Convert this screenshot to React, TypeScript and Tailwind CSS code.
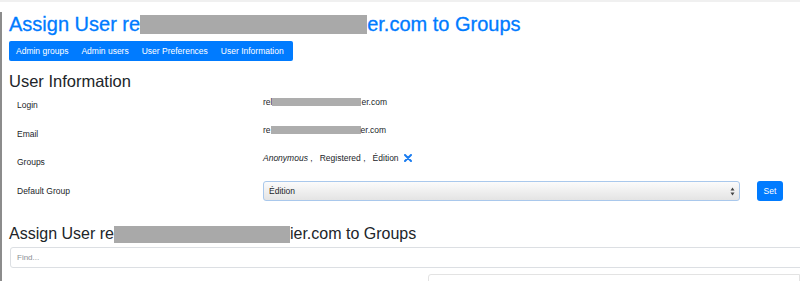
import React from 'react';

const Redact = ({ w, h }: { w: number; h: number }) => (
  <span className="inline-block bg-[#adadad] align-middle" style={{ width: w, height: h }} />
);

export default function App() {
  const navItems = ['Admin groups', 'Admin users', 'User Preferences', 'User Information'];

  return (
    <div className="h-[281px] w-[800px] overflow-hidden bg-white font-['Liberation_Sans',Arial,sans-serif] text-[#212529]">
      <div className="h-[2px] bg-[#f0f0f0]" />
      <div className="mt-[2px] h-full border-l-2 border-[#8c8c8c] pl-[7px]">
        {/* Title */}
        <h1 className="mt-[10px] flex h-[24px] items-center whitespace-nowrap text-[20px] leading-[24px] text-[#007bff] [-webkit-text-stroke:0.3px_#007bff]">
          <span>Assign User re</span>
          <span className="inline-block h-[19px] w-[227px] bg-[#a9a9a9]" />
          <span>er.com to Groups</span>
        </h1>

        {/* Tabs */}
        <nav className="mt-[5px] flex h-[20px] w-[284px] items-center gap-[13px] rounded-[2px] bg-[#007bff] px-[7px] text-[8.5px] text-white">
          {navItems.map((n) => (
            <span key={n} className="whitespace-nowrap">{n}</span>
          ))}
        </nav>

        {/* User Information */}
        <h2 className="mt-[10px] h-[20px] text-[16.5px] leading-[20px]">User Information</h2>

        <div className="text-[8.5px] leading-[12px]">
          <div className="flex h-[29px] pl-[8px]">
            <div className="w-[246px] pt-[8px]">Login</div>
            <div className="box-content flex h-[12px] items-center pt-[5px]">
              <span>rel</span>
              <Redact w={89} h={8} />
              <span>er.com</span>
            </div>
          </div>
          <div className="flex h-[29px] pl-[8px]">
            <div className="w-[246px] pt-[8px]">Email</div>
            <div className="box-content flex h-[12px] items-center pt-[4px]">
              <span>re</span>
              <Redact w={90} h={8} />
              <span>er.com</span>
            </div>
          </div>
          <div className="flex h-[29px] pl-[8px]">
            <div className="w-[246px] pt-[7px]">Groups</div>
            <div className="box-content flex h-[12px] items-center whitespace-pre pt-[3px]">
              <span className="italic">Anonymous</span>
              <span> ,   Registered ,   Édition </span>
              <svg className="ml-[3px]" width="8" height="8" viewBox="0 0 8 8">
                <path d="M1 1 L7 7 M7 1 L1 7" stroke="#1a7cf0" strokeWidth="2" strokeLinecap="round" />
              </svg>
            </div>
          </div>
          <div className="flex h-[29px] pl-[8px]">
            <div className="w-[246px] pt-[7px]">Default Group</div>
            <div className="flex items-start pt-[3px]">
              <div className="flex h-[20px] w-[477px] items-center justify-between rounded-[3px] border border-[#a9c8ec] bg-gradient-to-b from-[#fbfbfb] to-[#e4e4e4] pl-[5px] pr-[4px]">
                <span>Édition</span>
                <svg width="5" height="9" viewBox="0 0 5 9">
                  <path d="M2.5 0.5 L4.5 3.5 L0.5 3.5 Z M2.5 8.5 L4.5 5.5 L0.5 5.5 Z" fill="#444" />
                </svg>
              </div>
              <button className="ml-[17px] h-[20px] w-[26px] rounded-[3px] bg-[#007bff] text-[8.5px] text-white">Set</button>
            </div>
          </div>
        </div>

        {/* Assign section */}
        <h2 className="mt-[17px] flex h-[20px] items-center whitespace-nowrap text-[16px] leading-[20px]">
          <span>Assign User re</span>
          <span className="inline-block h-[17px] w-[176px] bg-[#a9a9a9]" />
          <span>ier.com to Groups</span>
        </h2>

        <div className="mt-[3px] ml-[1px] flex h-[21px] w-[820px] items-center rounded-[3px] border border-[#dcdfe3] pl-[6px] text-[8px] text-[#8a8f94]">
          Find...
        </div>

        <div className="mt-[6px] flex">
          <div className="w-[419px] shrink-0" />
          <div className="h-[30px] w-[400px] rounded-tl-[3px] border border-[#e3e3e3]" />
        </div>
      </div>
    </div>
  );
}
